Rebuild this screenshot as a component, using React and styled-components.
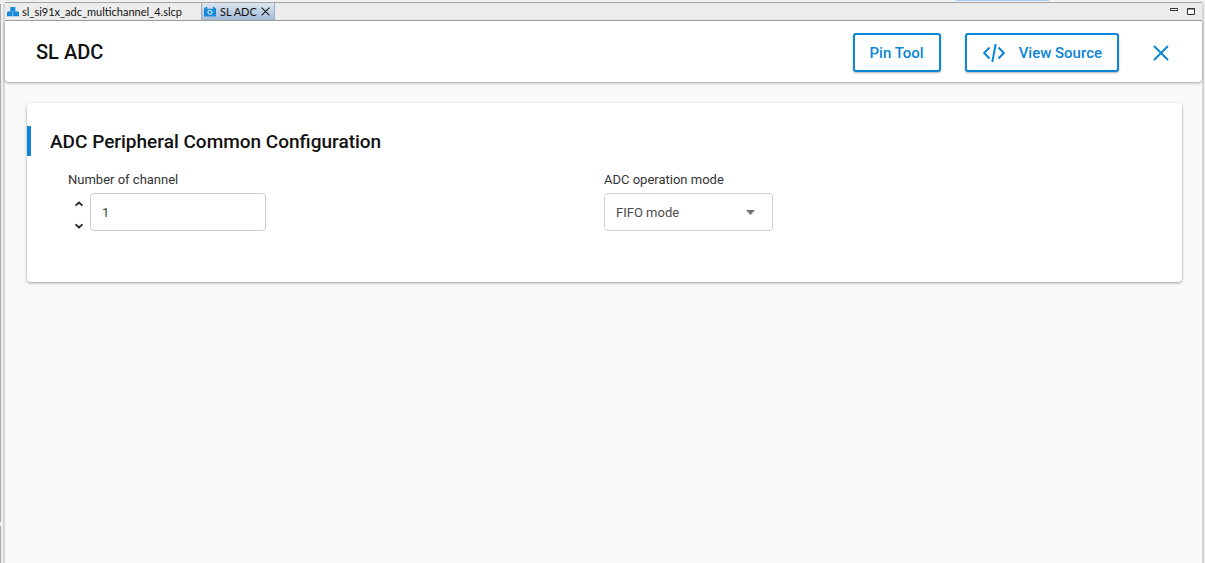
import React, { useState } from "react";
import styled, { createGlobalStyle } from "styled-components";

const blue = "#0b86d8";

const GlobalStyle = createGlobalStyle`
  * { box-sizing: border-box; }
  body {
    margin: 0;
    background: #f0f0f0;
    color: #111;
    font-family: Roboto, "Liberation Sans", sans-serif;
  }
  button, input, select { font: inherit; }
`;

const Window = styled.div`
  display: flex;
  flex-direction: column;
  min-height: 100vh;
`;

const TopStrip = styled.div`
  display: flex;
  justify-content: flex-end;
  height: 2px;
  padding-right: 156px;
`;

const StripHighlight = styled.div`
  width: 93px;
  height: 1px;
  background: #a9d1f5;
`;

const Workbench = styled.div`
  flex: 1;
  display: flex;
`;

const SideSash = styled.div`
  width: 3px;
  display: flex;
  flex-direction: column;
  gap: 4px;
  padding-top: 2px;
`;

const SashLine = styled.div`
  flex: ${(p) => p.$grow} 1 0;
  width: 1px;
  background: #ababab;
`;

const Frame = styled.div`
  flex: 1;
  min-width: 0;
  display: flex;
  flex-direction: column;
  margin-right: 1px;
  border: solid #d6d6d6;
  border-width: 0 2px;
  border-radius: 4px 4px 0 0;
`;

const TabBar = styled.div`
  display: flex;
  align-items: stretch;
  height: 19px;
  background: #ececec;
  border: solid #a6a6a6;
  border-width: 1px 0;
  font-family: Lato, "Open Sans", sans-serif;
  font-size: 11px;
  line-height: 16px;
`;

const Tab = styled.button`
  display: flex;
  align-items: center;
  gap: ${(p) => (p.$active ? 4 : 3)}px;
  padding: 0 ${(p) => (p.$active ? 4 : 19)}px 0 2px;
  border: solid #a3adb8;
  border-width: 0 ${(p) => (p.$active ? 1 : 0)}px;
  background: ${(p) => (p.$active ? "linear-gradient(#dbe5f0, #a2bbd6)" : "none")};
  color: #111;
  white-space: nowrap;
`;

const WindowControls = styled.div`
  display: flex;
  align-items: center;
  gap: 9px;
  margin-left: auto;
  padding-right: 7px;
  padding-bottom: 2px;
`;

const IconButton = styled.button`
  display: grid;
  place-items: center;
  padding: 0;
  border: 0;
  background: none;
  color: ${(p) => p.$color || "#222"};
`;

const Page = styled.main`
  flex: 1;
  background: #f9f9f9;
`;

const Header = styled.header`
  display: flex;
  align-items: center;
  gap: 24px;
  height: 61px;
  padding: 2px 33px 0 31px;
  background: #fff;
  border-radius: 0 0 4px 4px;
  box-shadow: 0 1px 3px rgba(0, 0, 0, 0.35);
`;

const Title = styled.h1`
  flex: 1;
  margin: 0;
  padding-bottom: 2px;
  font-size: 20px;
  font-weight: 500;
  line-height: 24px;
`;

const OutlineButton = styled.button`
  display: flex;
  align-items: center;
  gap: 14px;
  height: 39px;
  padding: 0 15px;
  border: 2px solid ${blue};
  border-radius: 3px;
  background: #fff;
  box-shadow: 0 1px 2px rgba(0, 0, 0, 0.3);
  color: ${blue};
  font-size: 15px;
  font-weight: 500;
  line-height: 20px;
`;

const CloseButton = styled(IconButton)`
  margin-left: 10px;
`;

const Card = styled.section`
  margin: 21px 20px 0 22px;
  padding: 23px 0 51px;
  background: #fff;
  border-radius: 4px;
  box-shadow: 0 1px 3px rgba(0, 0, 0, 0.38);
`;

const CardTitle = styled.h2`
  margin: 0;
  padding: 2px 0 0 19px;
  border-left: 4px solid ${blue};
  font-size: 19px;
  font-weight: 500;
  line-height: 28px;
`;

const Fields = styled.div`
  display: grid;
  grid-template-columns: 1fr 1fr;
  padding: 14px 42px 0 41px;
`;

const Field = styled.div`
  display: flex;
  flex-direction: column;
  align-items: flex-start;
  gap: 3px;
`;

const Label = styled.label`
  color: #333;
  font-size: 13px;
  line-height: 20px;
`;

const NumberRow = styled.div`
  display: flex;
  gap: 7px;
  padding-left: 7px;
`;

const Stepper = styled.div`
  display: flex;
  flex-direction: column;
  justify-content: space-between;
  padding: 7px 0 1px;
`;

const NumberInput = styled.input`
  width: 176px;
  height: 38px;
  padding: 0 11px;
  border: 1px solid #ccc;
  border-radius: 4px;
  background: #fff;
  color: #444;
  font-size: 13px;
`;

const SelectBox = styled.div`
  display: grid;
  align-items: center;
  width: 169px;
  & > * { grid-area: 1 / 1; }
  & > svg { justify-self: end; margin-right: 18px; pointer-events: none; }
`;

const Select = styled.select`
  appearance: none;
  width: 100%;
  height: 38px;
  padding: 0 32px 0 11px;
  border: 1px solid #d0d0d0;
  border-radius: 4px;
  background: #fff;
  color: #4a4a4a;
  font-size: 13px;
`;

const BlocksIcon = () => (
  <svg width="12" height="10" viewBox="0 0 12 10" fill="#168ad8" aria-hidden="true">
    <path d="M3.300 0h5v4.300h-5zM0 4.700h5.600v4.600H0zM6.200 4.700h5.800v4.600H6.200z" />
    <path d="M1.500 4h9v1.200h-9z" opacity=".6" />
  </svg>
);

const CameraIcon = () => (
  <svg width="12" height="10" viewBox="0 0 12 10" aria-hidden="true">
    <path d="M1 1h1.500l1 .7h5L9.500 1H11q1 0 1 1v6.500q0 1-1 1H1q-1 0-1-1V2q0-1 1-1zM1.300 0h2v1h-2zM8.700 0h2v1h-2z" fill="#168ad8" />
    <circle cx="6" cy="5.300" r="2" fill="#168ad8" stroke="#e4f2fc" strokeWidth="1.300" strokeDasharray="1.300 .4" />
  </svg>
);

const Cross = ({ size, weight }) => (
  <svg width={size} height={size} viewBox="0 0 16 16" fill="none" stroke="currentColor" strokeWidth={weight} aria-hidden="true">
    <path d="M1 1l14 14M15 1L1 15" />
  </svg>
);

const CodeIcon = () => (
  <svg width="23" height="20" viewBox="0 0 23 20" fill="none" stroke="currentColor" strokeWidth="2" aria-hidden="true">
    <path d="M7.500 4.500L2.200 10L7.500 15.500M16.500 4.500L21.800 10L16.500 15.500M13.700 1L10.300 19" />
  </svg>
);

const Chevron = ({ down }) => (
  <svg width="8" height="8" viewBox="0 0 8 8" fill="none" stroke="#222" strokeWidth="1.700" aria-hidden="true">
    <path d={down ? "M.5 2.300L4 5.500L7.500 2.300" : "M.5 5.700L4 2.500L7.500 5.700"} />
  </svg>
);

export default function App() {
  const [channels, setChannels] = useState(1);
  return (
    <>
      <GlobalStyle />
      <Window>
        <TopStrip><StripHighlight /></TopStrip>
        <Workbench>
          <SideSash>
            <SashLine $grow={517} />
            <SashLine $grow={37} />
          </SideSash>
          <Frame>
            <TabBar>
              <Tab><BlocksIcon />sl_si91x_adc_multichannel_4.slcp</Tab>
              <Tab $active><CameraIcon />SL ADC <Cross size={9} weight={1.8} /></Tab>
              <WindowControls>
                <IconButton aria-label="Minimize">
                  <svg width="8" height="10" viewBox="0 0 8 10" fill="#fff" stroke="#333">
                    <path d="M.5 2.500h7v2h-7z" />
                  </svg>
                </IconButton>
                <IconButton aria-label="Maximize">
                  <svg width="8" height="8" viewBox="0 0 8 8" fill="#fff" stroke="#333">
                    <path d="M.5 1.500h7v6h-7zM0 2h8" />
                  </svg>
                </IconButton>
              </WindowControls>
            </TabBar>
            <Page>
              <Header>
                <Title>SL ADC</Title>
                <OutlineButton>Pin Tool</OutlineButton>
                <OutlineButton><CodeIcon />View Source</OutlineButton>
                <CloseButton $color={blue} aria-label="Close"><Cross size={16} weight={2} /></CloseButton>
              </Header>
              <Card>
                <CardTitle>ADC Peripheral Common Configuration</CardTitle>
                <Fields>
                  <Field>
                    <Label htmlFor="channels">Number of channel</Label>
                    <NumberRow>
                      <Stepper>
                        <IconButton aria-label="Increase" onClick={() => setChannels(Number(channels) + 1)}><Chevron /></IconButton>
                        <IconButton aria-label="Decrease" onClick={() => setChannels(Number(channels) - 1)}><Chevron down /></IconButton>
                      </Stepper>
                      <NumberInput id="channels" value={channels} onChange={(e) => setChannels(e.target.value)} />
                    </NumberRow>
                  </Field>
                  <Field>
                    <Label htmlFor="mode">ADC operation mode</Label>
                    <SelectBox>
                      <Select id="mode"><option>FIFO mode</option></Select>
                      <svg width="9" height="5" viewBox="0 0 9 5" fill="#707070" aria-hidden="true"><path d="M0 0h9L4.500 5z" /></svg>
                    </SelectBox>
                  </Field>
                </Fields>
              </Card>
            </Page>
          </Frame>
        </Workbench>
      </Window>
    </>
  );
}
